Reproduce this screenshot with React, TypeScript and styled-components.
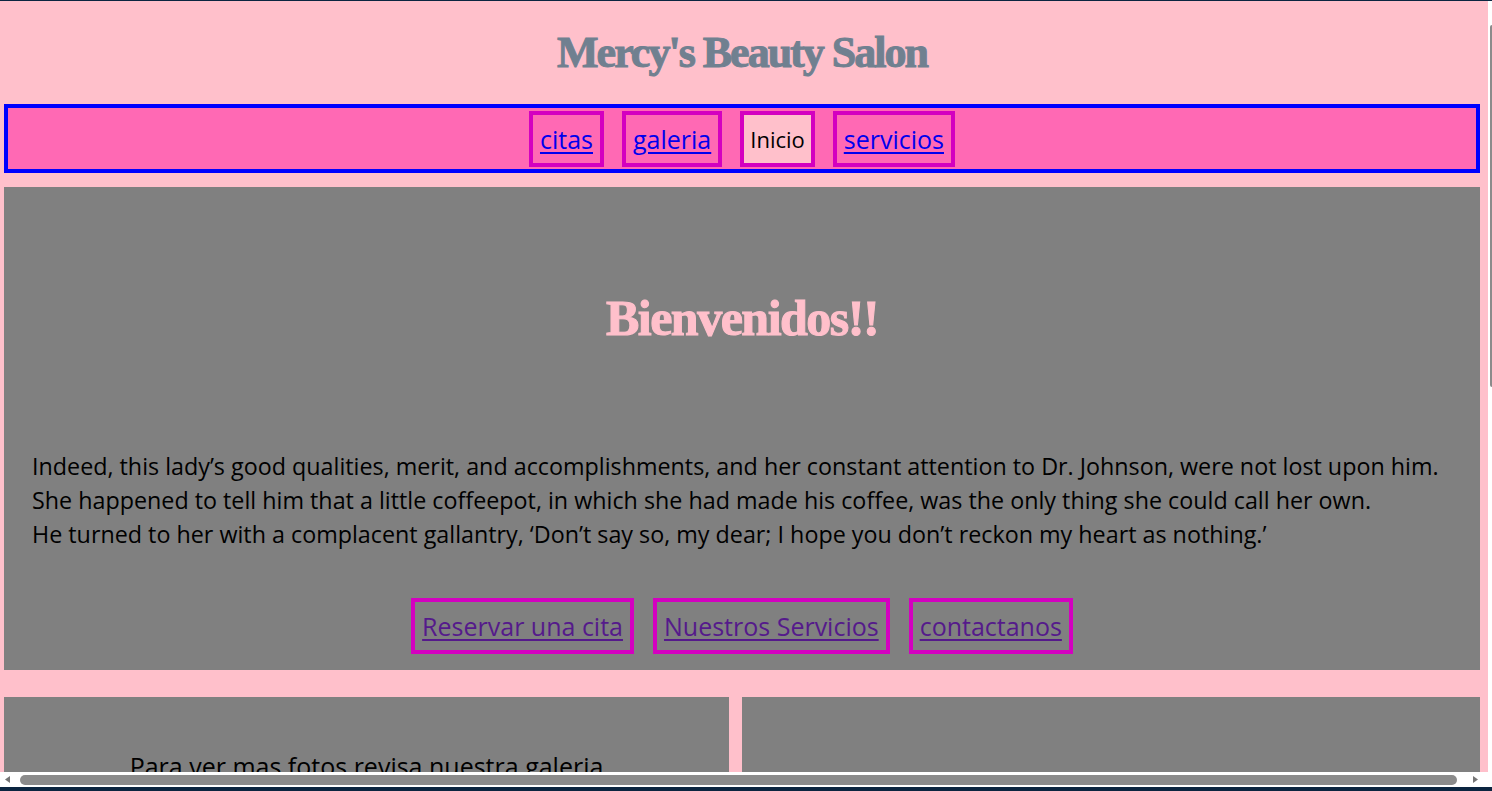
import React from "react";
import styled, { createGlobalStyle } from "styled-components";

const GlobalStyle = createGlobalStyle`
  html, body {
    margin: 0;
    padding: 0;
    width: 1492px;
    height: 791px;
    overflow: hidden;
  }
  body {
    font-family: "Open Sans", "DejaVu Sans", sans-serif;
  }
`;

const Frame = styled.div`
  width: 1492px;
  height: 791px;
  box-sizing: border-box;
  padding: 1px 0 4px;
  background: #0b2540;
  display: flex;
  flex-direction: column;
  overflow: hidden;
`;

const ViewRow = styled.div`
  flex: 1;
  min-height: 0;
  display: flex;
`;

const Viewport = styled.div`
  flex: 1;
  min-width: 0;
  margin-left: -4px;
  overflow: hidden;
  background: #ffc0cb;
`;

const VTrack = styled.div`
  width: 4px;
  flex: none;
  background: #ffffff;
  padding-top: 24px;
  box-sizing: border-box;
`;

const VThumb = styled.div`
  width: 2px;
  height: 362px;
  margin-left: 2px;
  background: #8b8b8b;
  border-radius: 2px 0 0 2px;
`;

const HTrack = styled.div`
  height: 15px;
  flex: none;
  background: #ffffff;
  display: flex;
  align-items: center;
  padding-right: 9px;
`;

const HThumb = styled.div`
  width: 1437px;
  height: 10px;
  margin-left: 5px;
  border-radius: 5px;
  background: #8b8b8b;
`;

const ArrowIcon = styled.svg<{ $end?: boolean }>`
  width: 15px;
  height: 15px;
  flex: none;
  margin-left: ${(p) => (p.$end ? "auto" : "0")};
`;

const Page = styled.div`
  width: 1514px;
  box-sizing: border-box;
  padding: 0 30px 0 8px;
`;

const Header = styled.header`
  height: 103px;
  display: flex;
  align-items: center;
  justify-content: center;
`;

const SiteTitle = styled.h1`
  margin: 0;
  font-family: "Liberation Serif", "Times New Roman", serif;
  font-weight: 700;
  font-size: 44px;
  letter-spacing: -2px;
  -webkit-text-stroke: 1px #708090;
  color: #708090;
  line-height: 1;
`;

const Nav = styled.nav`
  height: 69px;
  box-sizing: border-box;
  border: 4px solid #0000ff;
  background: #ff69b4;
  display: flex;
  align-items: center;
  justify-content: center;
  gap: 18px;
  padding-top: 1px;
`;

const BoxLink = styled.a<{ $tone: "link" | "visited" | "current" }>`
  height: 56px;
  box-sizing: border-box;
  border: 4px solid #d400c0;
  padding: 0 ${(p) => (p.$tone === "current" ? "6px" : "7px")};
  display: flex;
  align-items: center;
  font-size: ${(p) => (p.$tone === "current" ? "22px" : "25px")};
  color: ${(p) =>
    p.$tone === "link" ? "#0000ee" : p.$tone === "visited" ? "#551a8b" : "#000000"};
  text-decoration: ${(p) => (p.$tone === "current" ? "none" : "underline")};
  text-underline-offset: 3px;
  background: ${(p) => (p.$tone === "current" ? "#ffc0cb" : "transparent")};
  cursor: pointer;
`;

const Main = styled.main`
  margin-top: 14px;
  background: #808080;
  padding-bottom: 16px;
`;

const HeroTitle = styled.h2`
  margin: 0;
  height: 262px;
  display: flex;
  align-items: center;
  justify-content: center;
  font-family: "Liberation Serif", "Times New Roman", serif;
  font-weight: 700;
  font-size: 50px;
  letter-spacing: -1.5px;
  -webkit-text-stroke: 1px #ffc0cb;
  color: #ffc0cb;
`;

const Intro = styled.p`
  margin: 0;
  padding: 0 28px;
  font-size: 23.3px;
  line-height: 34px;
  color: #000000;
  white-space: nowrap;
`;

const ButtonRow = styled.div`
  margin-top: 47px;
  display: flex;
  justify-content: center;
  gap: 19px;
`;

const Cards = styled.section`
  margin-top: 27px;
  display: grid;
  grid-template-columns: 725fr 738fr;
  gap: 13px;
`;

const Card = styled.div`
  background: #808080;
  min-height: 420px;
  padding-top: 52px;
  box-sizing: border-box;
`;

const CardText = styled.p`
  margin: 0;
  text-align: center;
  font-size: 25px;
  line-height: 34px;
  color: #000000;
`;

function Arrow({ dir }: { dir: "left" | "right" }) {
  return (
    <ArrowIcon viewBox="0 0 15 15" $end={dir === "right"}>
      <polygon
        points={dir === "left" ? "10,4 10,11 5,7.5" : "5,4 5,11 10,7.5"}
        fill="#767676"
      />
    </ArrowIcon>
  );
}

export default function App() {
  return (
    <>
      <GlobalStyle />
      <Frame>
        <ViewRow>
          <Viewport>
            <Page>
              <Header>
                <SiteTitle>Mercy's Beauty Salon</SiteTitle>
              </Header>
              <Nav>
                <BoxLink $tone="link">citas</BoxLink>
                <BoxLink $tone="link">galeria</BoxLink>
                <BoxLink $tone="current">Inicio</BoxLink>
                <BoxLink $tone="link">servicios</BoxLink>
              </Nav>
              <Main>
                <HeroTitle>Bienvenidos!!</HeroTitle>
                <Intro>
                  Indeed, this lady’s good qualities, merit, and accomplishments, and her constant attention to Dr. Johnson, were not lost upon him.
                  <br />
                  She happened to tell him that a little coffeepot, in which she had made his coffee, was the only thing she could call her own.
                  <br />
                  He turned to her with a complacent gallantry, ‘Don’t say so, my dear; I hope you don’t reckon my heart as nothing.’
                </Intro>
                <ButtonRow>
                  <BoxLink $tone="visited">Reservar una cita</BoxLink>
                  <BoxLink $tone="visited">Nuestros Servicios</BoxLink>
                  <BoxLink $tone="visited">contactanos</BoxLink>
                </ButtonRow>
              </Main>
              <Cards>
                <Card>
                  <CardText>Para ver mas fotos revisa nuestra galeria</CardText>
                </Card>
                <Card />
              </Cards>
            </Page>
          </Viewport>
          <VTrack>
            <VThumb />
          </VTrack>
        </ViewRow>
        <HTrack>
          <Arrow dir="left" />
          <HThumb />
          <Arrow dir="right" />
        </HTrack>
      </Frame>
    </>
  );
}
